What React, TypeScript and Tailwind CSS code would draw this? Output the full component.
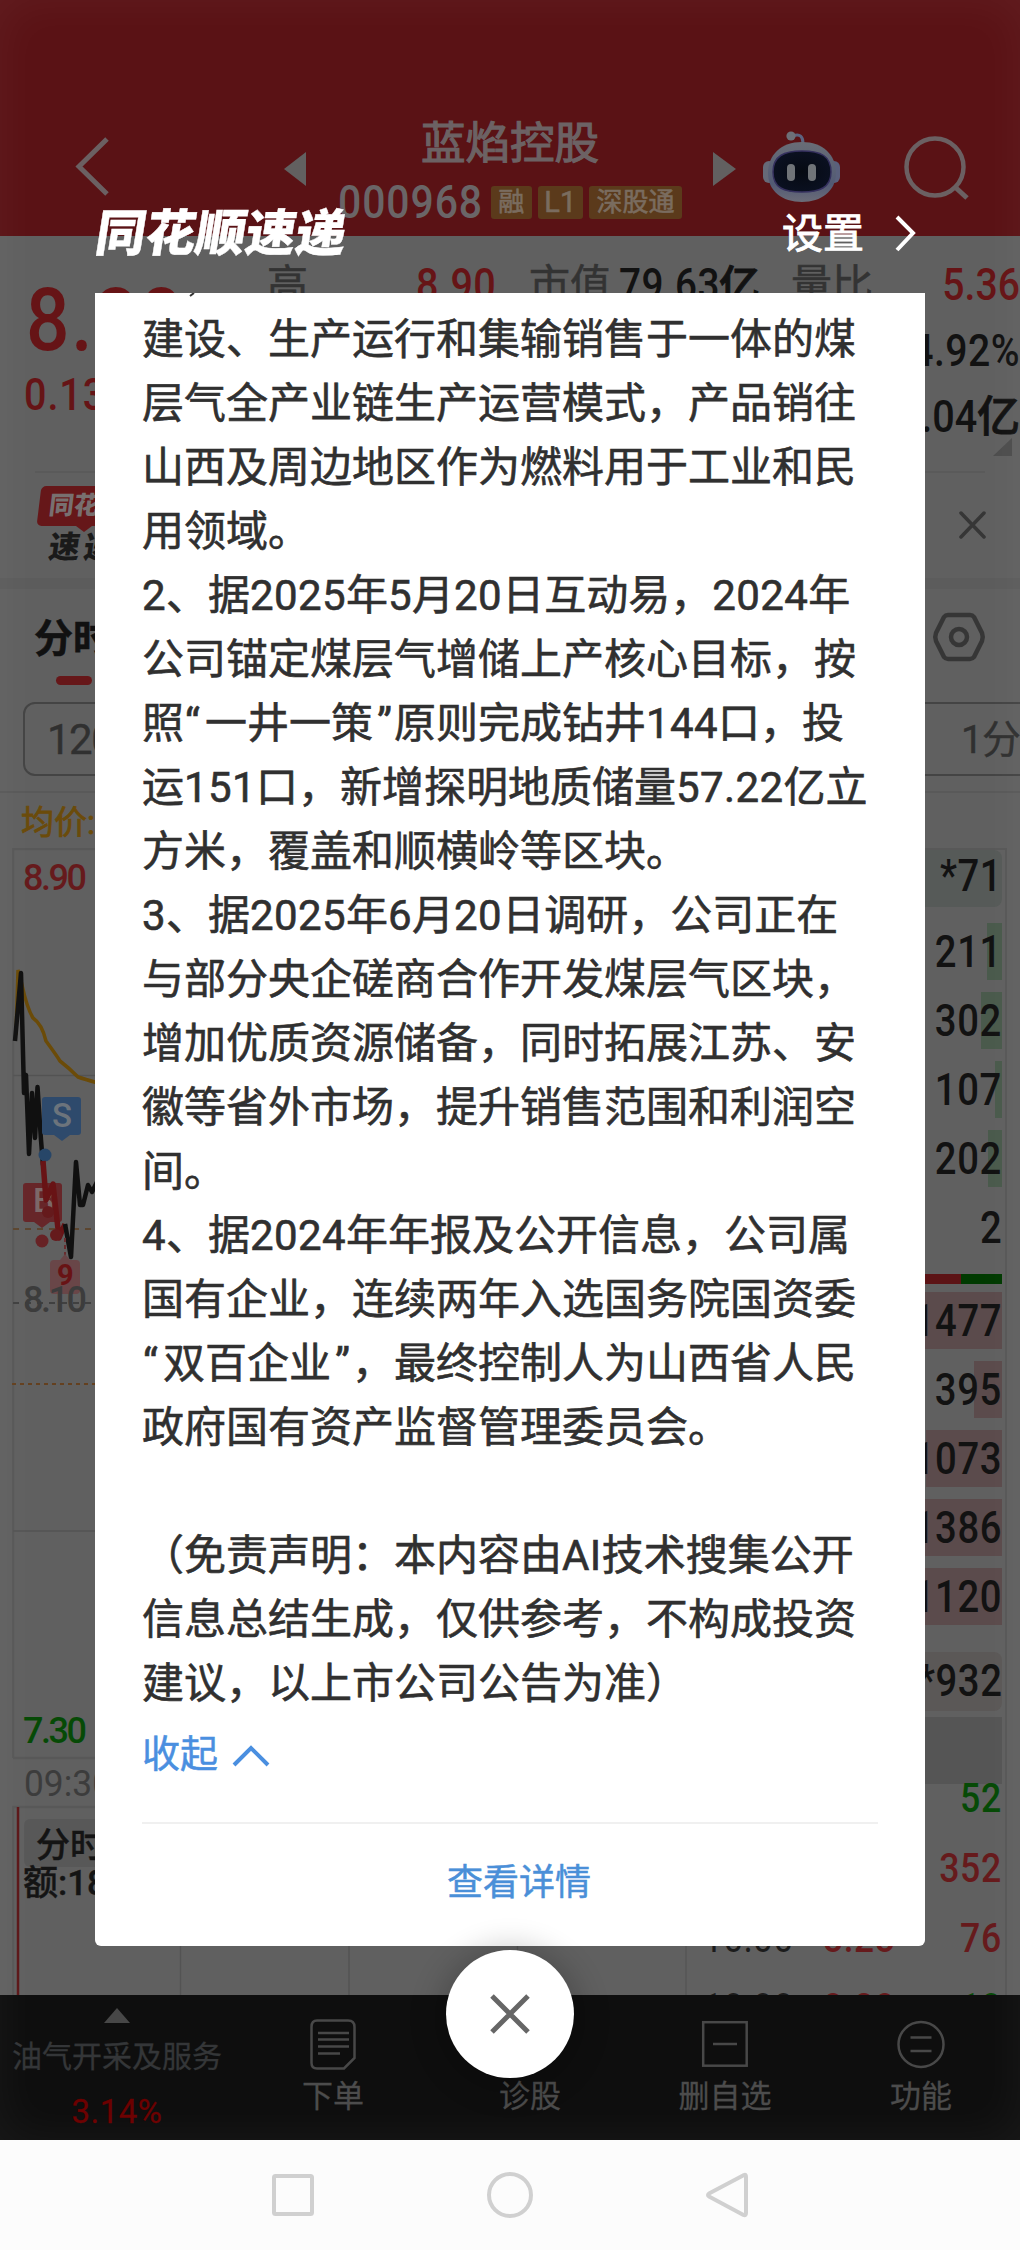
import React from "react";

const FONT = "font-['Roboto','Noto_Sans_CJK_SC',sans-serif]";

const lines: string[] = [
  "建设、生产运行和集输销售于一体的煤",
  "层气全产业链生产运营模式，产品销往",
  "山西及周边地区作为燃料用于工业和民",
  "用领域。",
  "2、据2025年5月20日互动易，2024年",
  "公司锚定煤层气增储上产核心目标，按",
  "照“一井一策”原则完成钻井144口，投",
  "运151口，新增探明地质储量57.22亿立",
  "方米，覆盖和顺横岭等区块。",
  "3、据2025年6月20日调研，公司正在",
  "与部分央企磋商合作开发煤层气区块，",
  "增加优质资源储备，同时拓展江苏、安",
  "徽等省外市场，提升销售范围和利润空",
  "间。",
  "4、据2024年年报及公开信息，公司属",
  "国有企业，连续两年入选国务院国资委",
  "“双百企业”，最终控制人为山西省人民",
  "政府国有资产监督管理委员会。",
  "",
  "（免责声明：本内容由AI技术搜集公开",
  "信息总结生成，仅供参考，不构成投资",
  "建议，以上市公司公告为准）",
];

function Line({ text }: { text: string }) {
  return (
    <p className="h-[64px] whitespace-nowrap">
      {text.split(/([“”]|[0-9A-Z.]+)/).map((part, i) => {
        if (part === "“")
          return (
            <span key={i} className="inline-block w-[21px] pl-px text-left">
              {part}
            </span>
          );
        if (part === "”")
          return (
            <span key={i} className="inline-block w-[21px] pr-[2px] text-right">
              {part}
            </span>
          );
        if (/^[0-9A-Z.]+$/.test(part))
          return (
            <span key={i} className="tracking-[0.4px]">
              {part}
            </span>
          );
        return part;
      })}
    </p>
  );
}

function Robot() {
  return (
    <svg width="78" height="72" viewBox="0 0 78 72">
      <defs>
        <linearGradient id="shell" x1="0" y1="0" x2="0" y2="1">
          <stop offset="0" stopColor="#696d76" />
          <stop offset="0.7" stopColor="#525a74" />
          <stop offset="1" stopColor="#6b6c78" />
        </linearGradient>
        <radialGradient id="visor">
          <stop offset="0" stopColor="#060a12" />
          <stop offset="1" stopColor="#0a1020" />
        </radialGradient>
      </defs>
      <path d="M30 5 C37 2 40 6 40 12" fill="none" stroke="#5c6480" strokeWidth="3" />
      <circle cx="28" cy="5" r="4.6" fill="#6d7078" />
      <rect x="0" y="30" width="12" height="22" rx="6" fill="#666a78" />
      <rect x="65" y="30" width="12" height="22" rx="6" fill="#5a607c" />
      <path d="M39 11 C60 11 73 24 73 42 C73 60 58 71 39 71 C19 71 5 60 5 42 C5 24 18 11 39 11Z" fill="url(#shell)" />
      <path d="M39 20 C58 20 68 25 68 41 C68 57 56 61 39 61 C21 61 10 57 10 41 C10 25 21 20 39 20Z" fill="url(#visor)" stroke="#35305e" strokeWidth="1.5" />
      <rect x="24" y="33" width="8" height="17" rx="4" fill="#707478" />
      <rect x="45" y="33" width="8" height="17" rx="4" fill="#707478" />
    </svg>
  );
}

function Header() {
  return (
    <header className="flex h-[236px] items-start bg-[#5a1215] text-[#6c6264]">
      <svg className="mt-[134px] ml-[72px]" width="40" height="64" fill="none" stroke="#6b6062" strokeWidth="5">
        <path d="M35 5L7 32.500L35 60" />
      </svg>
      <svg className="mt-[152px] ml-[172px]" width="22" height="34">
        <path d="M22 0V34L0 17Z" fill="#626060" />
      </svg>
      <div className="mt-[116px] ml-[32px] flex w-[344px] flex-col items-center">
        <div className="text-[44.500px] leading-[56px] [-webkit-text-stroke:1.2px]">蓝焰控股</div>
        <div className="mt-[14px] flex h-[33px] w-full items-center gap-[6px] leading-[33px] text-[#6a6567]">
          <span className="mr-[4px] flex h-[33px] w-[143px]">
            <span className="origin-left scale-x-[0.89] text-[46px] font-medium tracking-[1px]">000968</span>
          </span>
          <span className="w-[41px] rounded-[3px] bg-[#5b3a1b] text-center text-[26px] text-[#7a6c5f] [-webkit-text-stroke:0.6px]">融</span>
          <span className="w-[46px] rounded-[3px] bg-[#5b3a1b] text-center text-[29px] text-[#7a6c5f] [-webkit-text-stroke:0.6px]">L1</span>
          <span className="w-[94px] rounded-[3px] bg-[#5b3a1b] text-center text-[26px] text-[#7a6c5f] [-webkit-text-stroke:0.6px]">深股通</span>
        </div>
      </div>
      <svg className="mt-[152px] ml-[31px]" width="23" height="34">
        <path d="M0 0V34L23 17Z" fill="#626060" />
      </svg>
      <div className="mt-[131px] ml-[27px]">
        <Robot />
      </div>
      <svg className="mt-[135px] ml-[61px]" width="68" height="68" fill="none" stroke="#6b6062" strokeWidth="4.5">
        <circle cx="33" cy="32" r="28.500" />
        <path d="M53 52L65 63" strokeWidth="5" />
      </svg>
    </header>
  );
}

function Quote() {
  return (
    <section className="flex h-[235px] whitespace-nowrap text-[#121212]">
      <div className="w-[267px] pl-[24px] font-medium text-[#661416]">
        <div className="mt-[52px] ml-[2px] origin-left scale-x-[0.87] text-[88px] leading-[64px] tracking-[2px]">8.28</div>
        <div className="mt-[26px] origin-left scale-x-[0.88] text-[45px] leading-[34px] tracking-[1px]">0.13</div>
      </div>
      <div className="flex-1 pt-[16px] text-[45px] leading-[66px]">
        <div className="flex h-[66px]">
          <span className="w-[149px] text-[41px] text-[#333] [-webkit-text-stroke:0.6px]">高</span>
          <span className="w-[113px] origin-left scale-x-[0.88] font-medium tracking-[0.5px] text-[#661416]">8.90</span>
          <span className="w-[90px] text-[41px] text-[#333] [-webkit-text-stroke:0.6px]">市值</span>
          <span className="w-[172px] font-medium tracking-[0.5px]">
            <span className="inline-block w-[100px] origin-left scale-x-[0.86]">79.63</span>
            <span className="text-[41px] tracking-normal [-webkit-text-stroke:1px]">亿</span>
          </span>
          <span className="w-[90px] text-[41px] text-[#333] [-webkit-text-stroke:0.6px]">量比</span>
          <span className="flex-1 origin-right scale-x-[0.87] text-right font-medium text-[#661416]">5.36</span>
        </div>
        <div className="origin-right scale-x-[0.87] text-right font-medium tracking-[0.5px]">4.92%</div>
        <div className="flex justify-end font-medium">
          <span className="origin-right scale-x-[0.88]">8.04</span>
          <span className="text-[43px] [-webkit-text-stroke:0.8px]">亿</span>
        </div>
        <svg className="mt-[-12px] ml-auto mr-[8px]" width="19" height="18">
          <path d="M19 0V18H0Z" fill="#4d4d4d" />
        </svg>
      </div>
    </section>
  );
}

function News() {
  return (
    <section className="mx-[35px] flex h-[107px] justify-between border-t-2 border-[#5a5a5a]">
      <div className="mt-[13px]">
        <div className="ml-[4px] h-[40px] w-[104px] skew-x-[-7deg] rounded-[5px] bg-[#661719] pl-[10px] text-[25px] leading-[40px] font-black whitespace-nowrap text-[#787070]">
          同花顺
        </div>
        <svg className="ml-[41px]" width="16" height="6">
          <path d="M0 0H16L8 6Z" fill="#661719" />
        </svg>
        <div className="ml-[14px] skew-x-[-8deg] text-[31px] leading-[32px] font-black tracking-[4px] whitespace-nowrap text-[#1a1a1a]">速递</div>
      </div>
      <svg className="mt-[38px] mr-[-2px]" width="28" height="28" fill="none" stroke="#363636" strokeWidth="3.500" strokeLinecap="round">
        <path d="M2 2L25 26M25 2L2 26" />
      </svg>
    </section>
  );
}

function Tabs() {
  return (
    <section className="h-[204px] border-b-2 border-[#595959]">
      <div className="flex h-[113px] justify-between pt-[19px]">
        <div className="pl-[34px]">
          <div className="text-[39px] leading-[62px] font-bold text-[#111] [-webkit-text-stroke:0.6px]">分时</div>
          <div className="mt-[6px] ml-[22px] h-[9px] w-[36px] rounded-full bg-[#661719]" />
        </div>
        <svg className="mt-[2px] mr-[34px]" width="54" height="54" fill="none" stroke="#363636" strokeWidth="4.500" strokeLinejoin="round">
          <path d="M16 5Q13.500 5 12 7L4 23Q2.500 27 4 31L12 47Q13.500 49 16 49H38Q40.500 49 42 47L50 31Q51.500 27 50 23L42 7Q40.500 5 38 5Z" />
          <circle cx="27" cy="27" r="8" />
        </svg>
      </div>
      <div className="ml-[23px] flex h-[74px] overflow-hidden text-[42px] leading-[72px] text-[#303030]">
        <div className="w-[870px] rounded-[12px] border-2 border-[#444] pl-[22px] tracking-[-1.5px] [-webkit-text-stroke:0.4px]">120日</div>
        <div className="flex-1 rounded-l-[12px] border-2 border-r-0 border-[#444] pl-[76px] text-[39px] tracking-[-1px] whitespace-nowrap [-webkit-text-stroke:0.4px]">1分</div>
      </div>
    </section>
  );
}

function Chart() {
  return (
    <div className="w-[673px]">
      <svg width="673" height="1147" viewBox="12 848 673 1147" fill="none" className="text-[36px] font-medium">
        <path d="M13 1995V1807H685M13 1758V849H685M13 1758H685" stroke="#585858" strokeWidth="2.500" />
        <path d="M13 1075.500H685M13 1531H685M180.500 1807V1995M349 1807V1995M517.500 1807V1995" stroke="#535353" strokeWidth="1.500" />
        <path d="M13 1229H685" stroke="#5c452f" strokeWidth="1.800" strokeDasharray="6 6" />
        <path d="M13 1303H685" stroke="#404040" strokeWidth="2" strokeDasharray="6 6" />
        <path d="M12 1384H685" stroke="#64401f" strokeWidth="2" strokeDasharray="4 4" />
        <path d="M16 1035L18 970L22 985Q27 1008 33 1018Q42 1024 46 1041Q57 1056 60 1061Q69 1068 78 1077Q84 1079 98 1083" stroke="#6b4b08" strokeWidth="3.500" />
        <path d="M15 1041L21 973L24 1093L26 1075L29 1154L32 1093L35 1138L37.500 1087L41 1140L43 1165" stroke="#101010" strokeWidth="4.500" strokeLinejoin="round" />
        <rect x="42" y="1097" width="39" height="38" rx="3" fill="#2e4a6c" />
        <path d="M54 1135H70L62 1141Z" fill="#2e4a6c" />
        <text x="52" y="1127" fill="#6c747c" fontSize="34" textLength="20" lengthAdjust="spacingAndGlyphs">S</text>
        <ellipse cx="45" cy="1155" rx="6.500" ry="6.500" fill="#274668" />
        <rect x="23" y="1183" width="39" height="39" rx="3" fill="#672629" />
        <path d="M34 1222H50L42 1228Z" fill="#672629" />
        <text x="33" y="1212" fill="#7c6868" fontSize="33">B</text>
        <path d="M43 1161L46 1200L53 1184L59 1238L65 1224" stroke="#681315" strokeWidth="5.500" strokeLinejoin="round" />
        <path d="M65 1224L71 1257L76 1162L80 1205L83 1205L88 1185L92 1192L98 1180" stroke="#101010" strokeWidth="4.500" strokeLinejoin="round" />
        <circle cx="48" cy="1212" r="6" fill="#651a1c" />
        <circle cx="42" cy="1241" r="6.500" fill="#672225" />
        <circle cx="56" cy="1235" r="6" fill="#651a1c" />
        <path d="M65 1238V1256" stroke="#682c2e" strokeWidth="2" strokeDasharray="4 3" />
        <path d="M54 1260H60L65 1254L70 1260H76Q80 1260 80 1264V1290Q80 1294 76 1294H54Q50 1294 50 1290V1264Q50 1260 54 1260Z" fill="#694648" />
        <text x="57" y="1285" fill="#681315" fontSize="29" fontWeight="bold">9</text>
        <text x="23" y="890" fill="#661a1c" textLength="64">8.90</text>
        <text x="23" y="1312" fill="#3c3c3c" textLength="64">8.10</text>
        <text x="23" y="1742.500" fill="#064a06" textLength="64">7.30</text>
        <text x="24" y="1796" fill="#3c3c3c" fontWeight="normal" textLength="88" lengthAdjust="spacingAndGlyphs">09:30</text>
        <rect x="24" y="1819" width="150" height="48" rx="6" fill="#585858" />
        <text x="36" y="1857" fill="#141414" stroke="#141414" strokeWidth="0.4" fontSize="34">分时</text>
        <text x="23" y="1895" fill="#141414" stroke="#141414" strokeWidth="0.4" fontSize="35">额:18</text>
        <path d="M18 1807V1995" stroke="#5c1719" strokeWidth="2.500" />
      </svg>
    </div>
  );
}

const asks = [
  { v: "211", bar: "w-[15px]" },
  { v: "302", bar: "w-[21px]" },
  { v: "107", bar: "w-[7px]" },
  { v: "202", bar: "w-[14px]" },
  { v: "2", bar: "w-0" },
];
const bids = [
  { v: "1477", bar: "w-[90px]" },
  { v: "395", bar: "w-[28px]" },
  { v: "1073", bar: "w-[76px]" },
  { v: "1386", bar: "w-[90px]" },
  { v: "1120", bar: "w-[90px]" },
];
const trades = [
  { t: "09:59", p: "8.28", v: "52", c: "text-[#064a06]" },
  { t: "09:59", p: "8.28", v: "352", c: "text-[#661a1c]" },
  { t: "10:00", p: "8.28", v: "76", c: "text-[#661a1c]" },
  { t: "10:00", p: "8.28", v: "10", c: "text-[#064a06]" },
];

function Level({ v, bar, color }: { v: string; bar: string; color: string }) {
  return (
    <div className="grid h-[57px] grid-cols-1 justify-items-end">
      <div className={`col-start-1 row-start-1 h-[57px] ${bar} ${color}`} />
      <span className="col-start-1 row-start-1 origin-right scale-x-[0.85]">{v}</span>
    </div>
  );
}

function Book() {
  return (
    <div className="w-[322px] border-x-2 border-t-2 border-[#585858] pr-[3px] text-right text-[45px] leading-[57px] font-medium tracking-[0.7px] text-[#121212]">
      <div className="h-[57px] rounded-[8px] bg-[#565a58] leading-[52px]">
        <span className="inline-block origin-right scale-x-[0.85]">*71</span>
      </div>
      <div className="mt-[16px] flex flex-col gap-[12px]">
        {asks.map((a) => (
          <Level key={a.v} {...a} color="bg-[#4a5a4c]" />
        ))}
      </div>
      <div className="mt-[18px] flex h-[10px]">
        <div className="flex-1 bg-[#5c1315]" />
        <div className="w-[41px] bg-[#003a00]" />
      </div>
      <div className="mt-[8px] flex flex-col gap-[12px]">
        {bids.map((b) => (
          <Level key={b.v} {...b} color="bg-[#5b4b4c]" />
        ))}
      </div>
      <div className="mt-[27px] h-[59px] rounded-[8px] bg-[#5b5857]">
        <span className="inline-block origin-right scale-x-[0.85]">*932</span>
      </div>
      <div className="mt-[6px] h-[67px] bg-[#555]" />
      <div className="flex flex-col gap-[42px] text-[41px] leading-[28px]">
        {trades.map((r, i) => (
          <div key={i} className="flex h-[28px] pl-[16px]">
            <span className="w-[120px] origin-left scale-x-[0.86] text-left font-normal text-[#1c1c1c]">{r.t}</span>
            <span className="origin-left scale-x-[0.86] text-[#661a1c]">{r.p}</span>
            <span className={`flex-1 origin-right scale-x-[0.87] ${r.c}`}>{r.v}</span>
          </div>
        ))}
      </div>
    </div>
  );
}

function BottomBar() {
  return (
    <footer className="flex h-[145px] bg-[#0e0e0e] text-[31px] text-[#4c4c4c] [-webkit-text-stroke:0.3px]">
      <div className="flex w-[234px] flex-col items-center">
        <svg className="mt-[13px]" width="26" height="15">
          <path d="M13 0L26 15H0Z" fill="#474747" />
        </svg>
        <span className="mt-[14px] text-[30px] leading-[40px] text-[#343638]">油气开采及服务</span>
        <span className="mt-[21px] text-[33px] leading-[28px] tracking-[0.5px] text-[#6c0000]">3.14%</span>
      </div>
      <div className="flex w-[198px] flex-col items-center">
        <svg className="mt-[23px]" width="48" height="54" fill="none" stroke="#484848" strokeWidth="2.500">
          <path d="M8 2.500H39Q45.500 2.500 45.500 9V40L35 50.500H8Q2.500 50.500 2.500 45V9Q2.500 2.500 8 2.500Z" />
          <path d="M9 15H40M9 21.500H40M9 28.500H40M9 35.500H31" />
        </svg>
        <span className="mt-[8px] leading-[34px]">下单</span>
      </div>
      <div className="flex w-[196px] flex-col items-center pt-[85px]">
        <span className="leading-[34px]">诊股</span>
      </div>
      <div className="flex w-[196px] flex-col items-center pr-[2px]">
        <svg className="mt-[25px]" width="48" height="50" fill="none" stroke="#484848" strokeWidth="2.500">
          <rect x="2.200" y="2.200" width="43.500" height="43.500" />
          <path d="M12 24H36" />
        </svg>
        <span className="mt-[10px] leading-[34px]">删自选</span>
      </div>
      <div className="flex w-[196px] flex-col items-center pr-[2px]">
        <svg className="mt-[25px]" width="50" height="50" fill="none" stroke="#484848" strokeWidth="2.500">
          <circle cx="25" cy="24.500" r="22.500" />
          <path d="M14.500 17.500H35.500M14.500 31H35.500" />
        </svg>
        <span className="mt-[10px] leading-[34px]">功能</span>
      </div>
    </footer>
  );
}

function SystemNav() {
  return (
    <nav className="flex h-[110px] items-center justify-center gap-[170px] bg-[#fcfcfc]">
      <svg width="46" height="46" fill="none" stroke="#d0d0d0" strokeWidth="4">
        <rect x="4" y="4" width="38" height="38" rx="1.500" />
      </svg>
      <svg width="48" height="48" fill="none" stroke="#d0d0d0" strokeWidth="4">
        <circle cx="24" cy="24" r="21" />
      </svg>
      <svg width="46" height="48" fill="none" stroke="#d0d0d0" strokeWidth="4" strokeLinejoin="round">
        <path d="M40 4Q42 3 42 6V42Q42 45 39.500 44L5 25.500Q3 24 5 22.500Z" />
      </svg>
    </nav>
  );
}

function Modal() {
  return (
    <div className="absolute top-[203px] left-[95px] w-[830px]">
      <div className="flex h-[90px] justify-between text-white">
        <div className="ml-[-1px] origin-left skew-x-[-9deg] text-[50px] leading-[62px] font-black whitespace-nowrap [-webkit-text-stroke:0.4px]">同花顺速递</div>
        <div className="flex items-start pr-[8px]">
          <span className="text-[41px] leading-[62px] [-webkit-text-stroke:1px]">设置</span>
          <svg className="mt-[11px] ml-[31px]" width="22" height="38" fill="none" stroke="#fff" strokeWidth="4">
            <path d="M2 3L18 19L2 36" />
          </svg>
        </div>
      </div>
      <main className="h-[1653px] overflow-hidden rounded-b-[6px] bg-white px-[47px]">
        <svg className="mb-[10px] ml-[47px]" width="10" height="5">
          <path d="M5 0L1 3" stroke="#333" strokeWidth="2" />
        </svg>
        <div className="text-[42px] leading-[64px] text-[#303030] [-webkit-text-stroke:0.6px]">
          {lines.map((t, i) => (
            <Line key={i} text={t} />
          ))}
        </div>
        <div className="mt-[8px] flex h-[60px] items-center text-[38px] leading-[60px] text-[#4a8fe0] [-webkit-text-stroke:0.5px]">
          收起
          <svg className="mt-[4px] ml-[14px]" width="38" height="24" fill="none" stroke="#4a8fe0" strokeWidth="4">
            <path d="M2 21L19 4L36 21" />
          </svg>
        </div>
        <div className="mt-[38px] h-[2px] bg-[#f0f0f0]" />
        <div className="pl-[18px] text-center text-[36px] leading-[119px] text-[#4a8fd8] [-webkit-text-stroke:0.5px]">查看详情</div>
      </main>
      <button className="mx-auto mt-[4px] flex h-[128px] w-[128px] items-center justify-center rounded-full bg-white shadow-[0_4px_30px_8px_rgba(0,0,0,0.2)]">
        <svg width="40" height="40" fill="none" stroke="#666" strokeWidth="5">
          <path d="M2 2L38 38M38 2L2 38" />
        </svg>
      </button>
    </div>
  );
}

export default function App() {
  return (
    <div className={`relative h-[2250px] w-[1020px] overflow-hidden bg-[#606060] ${FONT}`}>
      <Header />
      <div className="h-[1759px] overflow-hidden">
        <Quote />
        <News />
        <div className="h-[11px] bg-[#5c5c5c]" />
        <Tabs />
        <div className="h-[55px] pl-[21px] text-[33px] leading-[60px] text-[#6b4b0a] [-webkit-text-stroke:0.8px]">均价:8.26</div>
        <div className="ml-[12px] flex">
          <Chart />
          <Book />
        </div>
      </div>
      <BottomBar />
      <SystemNav />
      <div className="pointer-events-none absolute inset-x-0 top-0 h-[2140px] shadow-[inset_0_0_50px_rgba(255,255,255,0.05)]" />
      <Modal />
    </div>
  );
}
